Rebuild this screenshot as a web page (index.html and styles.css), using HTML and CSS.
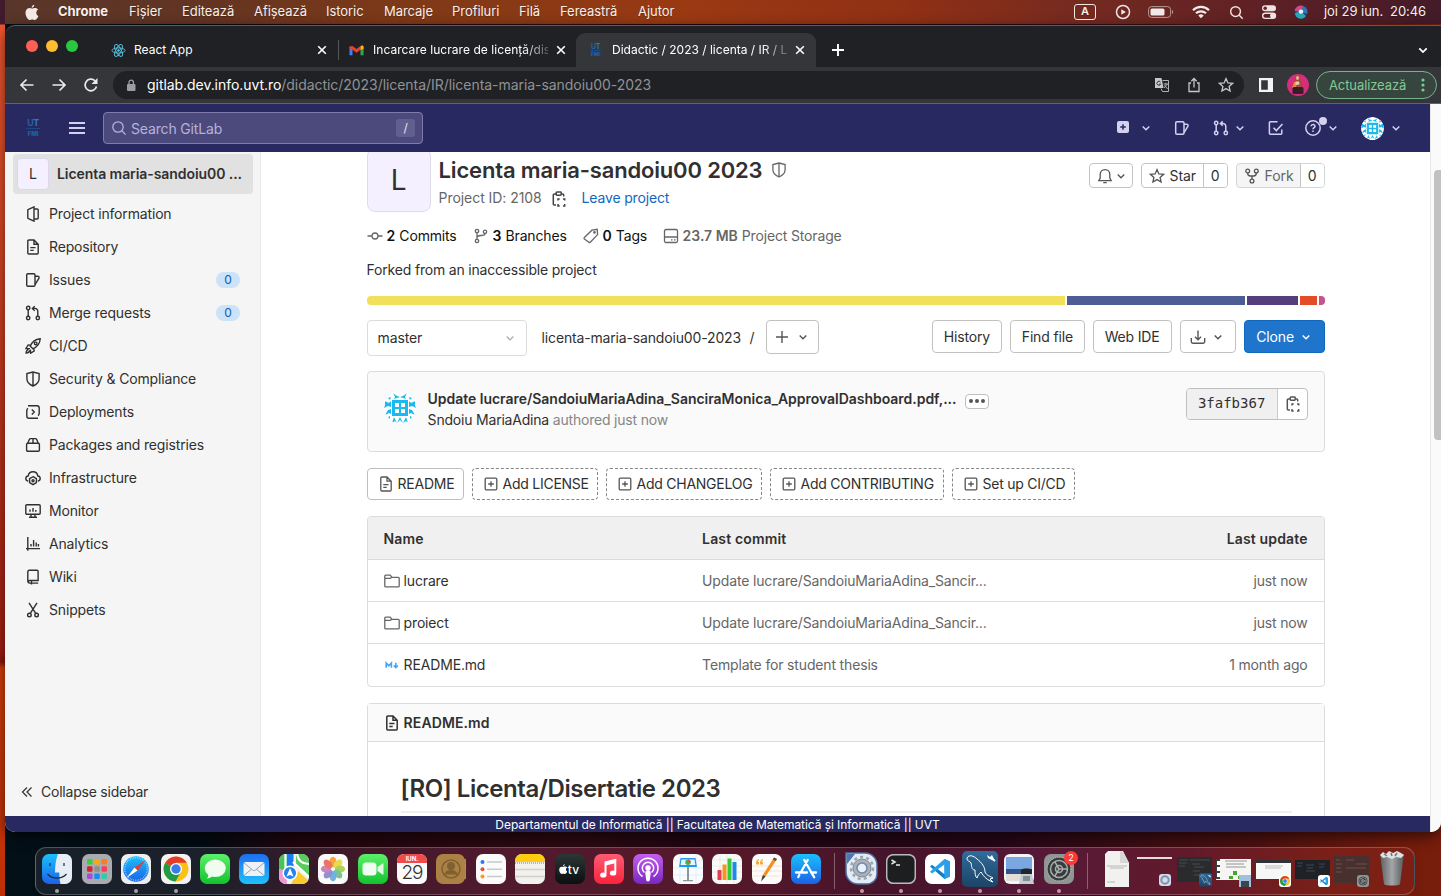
FILE: index.html
```html
<!DOCTYPE html>
<html lang="ro">
<head>
<meta charset="utf-8">
<title>Didactic / 2023 / licenta / IR / Licenta maria-sandoiu00 2023</title>
<link rel="stylesheet" href="styles.css">
</head>
<body>
<svg class="defs" aria-hidden="true">
  <defs>
    <linearGradient id="gBlue" x1="0" y1="0" x2="0" y2="1"><stop offset="0" stop-color="#1d6ff0"/><stop offset="1" stop-color="#1fc0fb"/></linearGradient>
    <linearGradient id="gStore" x1="0" y1="0" x2="0" y2="1"><stop offset="0" stop-color="#1ac0fb"/><stop offset="1" stop-color="#1c62e8"/></linearGradient>
    <linearGradient id="gGreen" x1="0" y1="0" x2="0" y2="1"><stop offset="0" stop-color="#5cf06a"/><stop offset="1" stop-color="#12c22d"/></linearGradient>
    <linearGradient id="gPink" x1="0" y1="0" x2="0" y2="1"><stop offset="0" stop-color="#fb5c74"/><stop offset="1" stop-color="#fa233b"/></linearGradient>
    <linearGradient id="gPurple" x1="0" y1="0" x2="0" y2="1"><stop offset="0" stop-color="#c45ff0"/><stop offset="1" stop-color="#7a27c0"/></linearGradient>
    <linearGradient id="gSea" x1="0" y1="0" x2="0" y2="1"><stop offset="0" stop-color="#2f6c9c"/><stop offset="1" stop-color="#1c4465"/></linearGradient>
    <linearGradient id="gTrash" x1="0" y1="0" x2="1" y2="0"><stop offset="0" stop-color="#5c6063"/><stop offset=".5" stop-color="#a3a7a9"/><stop offset="1" stop-color="#54585b"/></linearGradient>
    <linearGradient id="gTv" x1="0" y1="0" x2="0" y2="1"><stop offset="0" stop-color="#2b3735"/><stop offset="1" stop-color="#0b0f11"/></linearGradient>
  </defs>
  <symbol id="chev" viewBox="0 0 16 16"><path d="M4.700 6.500 8 9.800l3.300-3.300"/></symbol>
  <symbol id="close" viewBox="0 0 16 16"><path d="m4.200 4.200 7.600 7.600M11.800 4.200l-7.600 7.600"/></symbol>
  <symbol id="search" viewBox="0 0 16 16"><circle cx="7" cy="7" r="5.200"/><path d="m11 11 3.600 3.600"/></symbol>
  <symbol id="project" viewBox="0 0 16 16"><path d="M9 15.100 3.500 12.600a1 1 0 0 1-.7-1V4.400a1 1 0 0 1 .7-1L9 .9zM9 3h3.200a1 1 0 0 1 1 1v8a1 1 0 0 1-1 1H9"/></symbol>
  <symbol id="doc" viewBox="0 0 16 16"><path d="M9 1H3.800a1 1 0 0 0-1 1v12a1 1 0 0 0 1 1h8.400a1 1 0 0 0 1-1V5.200zM9 1v4.200h4.200M5.300 8.600h5.200M5.300 11.400h3.400"/></symbol>
  <symbol id="issues" viewBox="0 0 16 16"><rect x="1.700" y="1.800" width="8.300" height="12.400" rx="1.200"/><path d="M10 4.200h2.600a1.400 1.400 0 0 1 1.400 1.900L10 12.600"/></symbol>
  <symbol id="merge" viewBox="0 0 16 16"><circle cx="3.200" cy="3" r="1.700"/><circle cx="3.200" cy="13" r="1.700"/><circle cx="12.800" cy="13" r="1.700"/><path d="M3.200 4.700v6.600M12.800 11.300V6.200a2.800 2.800 0 0 0-2.800-2.800H7.600M9.700 1.200 7.400 3.400l2.300 2.300"/></symbol>
  <symbol id="rocket" viewBox="0 0 16 16"><path d="M5.300 8.200C7 4 10.400 1.200 15.200 .8c-.3 4.800-3 8.200-7.300 9.900zM5.600 7.300 3.200 6.900 1 10.500l4 .1M8.700 10.500l.5 2.500-3.600 2.200-.2-3.600M3.600 11.400c-1.800.4-2.400 1.700-2.500 3.600 1.800 0 3.200-.6 3.600-2.500"/><circle cx="10.700" cy="5.400" r="1.300"/></symbol>
  <symbol id="shield" viewBox="0 0 16 16"><path d="M8 1 1.900 2.500v5.200C1.900 11 4.500 13.500 8 15c3.500-1.500 6.100-4 6.100-7.300V2.500zM8 1v14"/></symbol>
  <symbol id="deploy" viewBox="0 0 16 16"><path d="M3 1.800H12a2.200 2.200 0 0 1 2.200 2.200v5.500a2.500 2.500 0 0 1-1.200 2.100M13 14.200H4A2.200 2.200 0 0 1 1.800 12V6.500a2.500 2.500 0 0 1 1.200-2.100M6.800 5.500 9.300 8l-2.500 2.500"/></symbol>
  <symbol id="package" viewBox="0 0 16 16"><path d="M2.800 6.200 4.300 2.500A1.500 1.500 0 0 1 5.700 1.600h4.600a1.500 1.500 0 0 1 1.400.9l1.500 3.700M8 1.600v4.600"/><rect x="1.600" y="6.200" width="12.800" height="8.100" rx="1.200"/></symbol>
  <symbol id="cloud" viewBox="0 0 16 16"><path d="M3.200 11.200C1.700 10.900.8 9.900.8 8.600c0-1.500 1-2.400 2.400-2.600C3.500 3.500 5.400 1.800 8 1.800s4.500 1.700 4.800 4.200c1.400.2 2.400 1.100 2.400 2.600 0 1.300-.9 2.300-2.400 2.600"/><path d="m8 6.700 3.400 2v4L8 14.700l-3.400-2v-4z"/><circle cx="8" cy="10.700" r="1"/></symbol>
  <symbol id="monitor" viewBox="0 0 16 16"><rect x=".8" y="1.700" width="14.400" height="9.600" rx="1"/><path d="M5 6.500v2.300M8 5v3.800M10.800 7v1.800M6 11.500v2.700M10 11.500v2.700M4 14.300h8"/></symbol>
  <symbol id="chart" viewBox="0 0 16 16"><path d="M2.800 1v13.800M1 12.600h14M6 8v2.500M8.600 4v6.500M11.200 6.500v4M13.400 8v2.500"/></symbol>
  <symbol id="book" viewBox="0 0 16 16"><path d="M5 14H4.500a1.800 1.800 0 0 1-1.700-1.800V2.600a1.300 1.300 0 0 1 1.300-1.300h8a1 1 0 0 1 1 1V11.500H4.500a1.300 1.300 0 0 0 0 2.600H13.200M6.500 11.500v4"/></symbol>
  <symbol id="snip" viewBox="0 0 16 16"><circle cx="4.400" cy="13" r="1.800"/><circle cx="11.600" cy="13" r="1.800"/><path d="M4 .8 10.700 11.400M12 .8 5.300 11.400"/></symbol>
  <symbol id="copy" viewBox="0 0 16 16"><path d="M5 14H3.300a1 1 0 0 1-1-1V4a1 1 0 0 1 1-1H5M10.500 3h1.200a1 1 0 0 1 1 1v1.500"/><rect x="5.200" y="1" width="5" height="3.200" rx=".7"/><path d="M7 9.500V8h1.700M12 8h1.700v1.500M13.700 13v2H12M8.700 15H7v-2"/></symbol>
  <symbol id="plusbox" viewBox="0 0 16 16"><rect x="2.200" y="2.200" width="11.600" height="11.600" rx="1.200"/><path d="M8 5.200v5.600M5.200 8h5.600"/></symbol>
  <symbol id="folder" viewBox="0 0 16 16"><path d="M.8 13V3a.9.9 0 0 1 .9-.9h4.500L8 4.300h6.300a.9.9 0 0 1 .9.9V13a.9.9 0 0 1-.9.9H1.700A.9.9 0 0 1 .8 13zM.8 5.400h5.400L8 4.300"/></symbol>
  <symbol id="star" viewBox="0 0 16 16"><path d="m8 1.600 1.900 4.300 4.700.4-3.500 3.100 1 4.600L8 11.600 3.900 14l1-4.600L1.400 6.300l4.700-.4z"/></symbol>
  <symbol id="identicon" viewBox="0 0 32 32"><circle cx="16" cy="16" r="16" fill="#fff"/>
    <g fill="#1cb9ee"><path d="M8 8h16v16H8zm3 3v4h4v-4zm6 0v4h4v-4zm-6 6v4h4v-4zm6 0v4h4v-4z" fill-rule="evenodd"/>
      <path d="M9 1l3 2.500L16 5l4-1.500L23 1l-2 4 1 2-3-1-3-1-3 1-3 1 1-2zM1 9l4 2 2-2v6l-3-1-4 2 1-3zM31 9l-4 2-2-2v6l3-1 4 2-1-3zM1 23l3-5 3-1v5l-2-1zM31 23l-3-5-3-1v5l2-1zM8 31l2-6 3 6-2-2zM13 31l3-6 3 6-3-3zM19 31l3-6 2 6-2-2zM4 25l2-1v3zM28 25l-2-1v3zM4 6l3-1-1 3zM28 6l-3-1 1 3z"/></g></symbol>
  <symbol id="chrome" viewBox="0 0 30 30"><circle cx="15" cy="15" r="12.500" fill="#fbc116"/><path d="M15 15 4.200 8.800A12.500 12.500 0 0 1 25.800 8.800H15z" fill="#e33b2e"/><path d="M4.200 8.800a12.500 12.500 0 0 0 10.300 18.700l5.200-9.200L15 15z" fill="#229a48"/><circle cx="15" cy="15" r="6" fill="#fff"/><circle cx="15" cy="15" r="4.700" fill="#3a7cec"/></symbol>
  <symbol id="vscode" viewBox="0 0 30 30"><rect width="30" height="30" rx="7" fill="#fff"/><path d="M19.500 5 25 7.500v15L19.500 25 5 12.500l2-1.800 12.500 9.500z" fill="#1180cc"/><path d="M19.500 5 25 7.500v15L19.500 25V10.500L7 19.500l-2-1.800z" fill="#2a9fea"/></symbol>
  <symbol id="dolphin" viewBox="0 0 36 36"><rect width="36" height="36" rx="5" fill="url(#gSea)"/><path d="M5 7c2-4 7-2 10 1 5 4 8 8 8 13 2 4 5 4 8 6l-3 1 3 3c-6-2-9-5-12-10-2 2-3 3-4 6-2-2-2-5-2-8-4 0-3-4-4-7-1-2-4-2-4-4z" fill="none" stroke="#fff" stroke-width="1"/><path d="m25 4 3 2 2-2 2 4-2 1-4-2z" fill="#fff"/><path d="m29 7 4 3" stroke="#fff" stroke-width="2"/></symbol>
  <symbol id="gear" viewBox="0 0 30 30"><circle cx="15" cy="15" r="11.500" fill="#373b3c"/><g fill="none" stroke="#a9adae"><circle cx="15" cy="15" r="12" stroke-width="1.300" stroke-dasharray="1 1"/><circle cx="15" cy="15" r="8.500" stroke-width="1.500"/><circle cx="15" cy="15" r="3.500"/><path d="M15 15h8.500M15 15l-4.300 7.300M15 15l-4.300-7.300" stroke-width="1.500"/></g></symbol>
</svg>

<header class="menubar">
  <svg class="apple" viewBox="0 0 14 16"><path fill="#f1e9e6" d="M9.300.2c.1 1.500-1.100 2.900-2.600 3C6.500 1.800 7.900.4 9.300.2zM11.300 8.300c0-1.500.8-2.500 1.900-3.200-.8-1.100-1.900-1.600-3.200-1.600-1.200 0-1.900.6-2.800.6-1 0-1.900-.6-3-.6C2 3.600.5 5.500.5 8.300c0 3.200 2.200 7.300 4.200 7.300.9 0 1.400-.6 2.600-.6s1.600.6 2.600.6c1.500 0 3-2.600 3.500-4-1.300-.6-2.100-1.800-2.100-3.300z"/></svg>
  <b>Chrome</b><span>Fișier</span><span>Editează</span><span>Afișează</span><span>Istoric</span><span>Marcaje</span><span>Profiluri</span><span>Filă</span><span>Fereastră</span><span>Ajutor</span>
  <i></i>
  <span class="kbd">A</span>
  <svg class="m16 ln" viewBox="0 0 16 16"><circle cx="8" cy="8" r="6.500"/><path d="m6.300 5.200 4.500 2.800-4.500 2.800z" fill="#eee" stroke="none"/></svg>
  <svg class="batt" viewBox="0 0 26 12"><rect x=".6" y=".6" width="22" height="10.800" rx="3" fill="none" stroke="#b59b97"/><rect x="2.500" y="2.400" width="14" height="7.200" rx="1.500" fill="#f1e9e8"/><path d="M24 4v4c1.500-.7 1.500-3.300 0-4z" fill="#b59b97"/></svg>
  <svg class="wifi" viewBox="0 0 18 14"><g fill="none" stroke="#f3eceb" stroke-width="2.200"><path d="M1 5.200a11.500 11.500 0 0 1 16 0M4 8.300a7.200 7.200 0 0 1 10 0"/></g><path d="M9 13.300 6.300 10.600a4 4 0 0 1 5.400 0z" fill="#f3eceb"/></svg>
  <svg class="m16 ln mag"><use href="#search"/></svg>
  <svg class="m16" viewBox="0 0 16 16"><rect x="1" y="1.200" width="14" height="6" rx="3" fill="#eee2e2"/><circle cx="4.200" cy="4.200" r="1.800" fill="#6a2426"/><rect x="1.700" y="9.200" width="12.800" height="5.200" rx="2.600" fill="none" stroke="#eee2e2" stroke-width="1.400"/><circle cx="11.600" cy="11.800" r="2.600" fill="#eee2e2"/></svg>
  <svg class="m16" viewBox="0 0 16 16"><circle cx="8" cy="8" r="7" fill="#31315f"/><path d="M1.500 7a6.500 6.500 0 0 1 9-5L8 8z" fill="#cf4b84"/><path d="M10 2a6 6 0 0 1 4 8L8 8z" fill="#3276b5"/><path d="M2 9a6 6 0 0 0 11 3L8 7z" fill="#27a7b5"/><circle cx="8" cy="7.600" r="2.200" fill="#e8f4fb"/></svg>
  <span class="date">joi 29 iun.</span><span class="time">20:46</span>
</header>

<div class="window">
  <div class="tabs">
    <div class="lights"><i></i><i></i><i></i></div>
    <div class="tab t1">
      <svg class="fav" viewBox="0 0 16 16"><ellipse cx="8" cy="8" rx="7" ry="2.800"/><ellipse cx="8" cy="8" rx="7" ry="2.800" transform="rotate(60 8 8)"/><ellipse cx="8" cy="8" rx="7" ry="2.800" transform="rotate(120 8 8)"/><circle cx="8" cy="8" r="1" fill="#53c1de"/></svg>
      <span class="tt">React App</span><svg class="x"><use href="#close"/></svg>
    </div>
    <div class="tab t2">
      <svg class="fav" viewBox="0 0 16 16"><path d="M.5 4v9h3.200V6.500z" fill="#3f82ee"/><path d="M15.500 4v9h-3.200V6.500z" fill="#33a653"/><path d="m.5 3.800 3.200-.6L8 6.500l4.300-3.300v3.900L8 10.300 3.700 7.100.5 5.500z" fill="#e8402f"/><path d="M12.300 3.200c1.500-1.200 3.200-.6 3.200.8v2l-3.200 1.500z" fill="#fbbc05"/></svg>
      <span class="tt fade">Incarcare lucrare de licență/dis</span><svg class="x"><use href="#close"/></svg>
    </div>
    <div class="tab t3">
      <span class="uvt mini"><b>U<em>T</em></b><small>FMI</small></span>
      <span class="tt fade">Didactic / 2023 / licenta / IR / Li</span><svg class="x"><use href="#close"/></svg>
    </div>
    <svg class="newtab" viewBox="0 0 16 16"><path d="M8 2v12M2 8h12"/></svg>
    <svg class="tabmenu"><use href="#chev"/></svg>
  </div>

  <div class="toolbar">
    <svg class="tb" viewBox="0 0 16 16"><path d="M14.500 8H2M7.500 2.500 2 8l5.500 5.500"/></svg>
    <svg class="tb" viewBox="0 0 16 16"><path d="M1.500 8H14M8.500 2.500 14 8l-5.500 5.500"/></svg>
    <svg class="tb" viewBox="0 0 16 16"><path d="M13.500 9.500A5.800 5.800 0 1 1 12 3.900"/><path d="M14.500 1v6h-6z" fill="#e8eaed" stroke="none"/></svg>
    <div class="omnibox">
      <svg class="lock" viewBox="0 0 10 13"><rect x="1" y="5" width="8.500" height="7" rx="1" fill="#9a9da1"/><path d="M3 5V3.300a2.200 2.200 0 0 1 4.400 0V5" fill="none" stroke="#9a9da1" stroke-width="1.300"/></svg>
      <span class="url"><b>gitlab.dev.info.uvt.ro</b>/didactic/2023/licenta/IR/licenta-maria-sandoiu00-2023</span>
      <svg class="ob tr" viewBox="0 0 16 16"><path d="M1 1h6.500l2 10H1z" fill="#c5c7ca"/><path d="M8.500 3.500h6v11h-6l-1.500-3M9.500 7h4.500M11.800 5.800V7M10 11l3.500-4M10.500 8l3 4" fill="none" stroke="#b0b2b5"/><path d="M6.500 5a2 2 0 1 0 .2 2.200H5" fill="none" stroke="#33353a"/></svg>
      <svg class="ob sh" viewBox="0 0 16 16"><path d="M5 6H3v8.500h10V6h-2M8 10.500V1.700M5.300 4.200 8 1.500l2.700 2.700"/></svg>
      <svg class="ob sh"><use href="#star"/></svg>
    </div>
    <svg class="panel" viewBox="0 0 14 14"><path d="M0 0h14v14H0zm2.200 2.200v9.600h6.600V2.200z" fill="#f1f3f4" fill-rule="evenodd"/></svg>
    <svg class="face" viewBox="0 0 22 22"><circle cx="11" cy="11" r="11" fill="#d42e7c"/><path d="M8.500 2.500C10 1 13 2 13 5l3 7-4 3-6-3 2-5z" fill="#a44d34"/><path d="m7 8-2 6 4-1 1-5z" fill="#e78a35"/><ellipse cx="10.500" cy="4" rx="1.500" ry="2" fill="#e6b291"/><path d="M8.500 7.500h3.500l.5 3-4 .5z" fill="#e8cdb8"/><rect x="5.500" y="13" width="11" height="7" rx="1.500" fill="#321f28"/></svg>
    <div class="update"><span>Actualizează</span><svg viewBox="0 0 4 14"><circle cx="2" cy="2" r="1.600"/><circle cx="2" cy="7" r="1.600"/><circle cx="2" cy="12" r="1.600"/></svg></div>
  </div>

  <div class="viewport">
    <div class="page">
      <nav class="gl-header">
        <span class="uvt"><b>U<em>T</em></b><small>FMI</small></span>
        <span class="burger"><i></i><i></i><i></i></span>
        <div class="gsearch"><svg><use href="#search"/></svg><span>Search GitLab</span><kbd>/</kbd></div>
        <div class="gicons">
          <svg viewBox="0 0 16 16"><rect x="2" y="1" width="12" height="12" rx="2" fill="#d3d0f0" stroke="none"/><path d="M8 4.200v5.600M5.200 7h5.600" stroke="#292961"/></svg>
          <svg><use href="#chev"/></svg>
          <svg><use href="#issues"/></svg>
          <svg><use href="#merge"/></svg>
          <svg><use href="#chev"/></svg>
          <svg viewBox="0 0 16 16"><path d="M9.500 1.800H2.300a.9.900 0 0 0-.9.900v10.600c0 .5.400.9.900.9h10.600c.5 0 .9-.4.900-.9V9.500M5.500 7.800l2.800 2.800 6.200-6.700"/></svg>
          <svg viewBox="0 0 16 16"><circle cx="8" cy="8" r="7.200"/><path d="M6 6.300c.2-2.600 4.200-2.400 4 .1C9.900 7.700 8 7.600 8 9.300M8 10.600v1.300"/><circle cx="18" cy="1" r="4" fill="#d3d0f0" stroke="none"/></svg>
          <svg><use href="#chev"/></svg>
          <svg class="gav"><use href="#identicon"/></svg>
          <svg><use href="#chev"/></svg>
        </div>
      </nav>

      <div class="body">
        <aside class="sidebar">
          <div class="ctx"><span class="pav">L</span><b>Licenta maria-sandoiu00 ...</b></div>
          <ul>
            <li><svg><use href="#project"/></svg>Project information</li>
            <li><svg><use href="#doc"/></svg>Repository</li>
            <li><svg><use href="#issues"/></svg>Issues<em>0</em></li>
            <li><svg><use href="#merge"/></svg>Merge requests<em>0</em></li>
            <li><svg><use href="#rocket"/></svg>CI/CD</li>
            <li><svg><use href="#shield"/></svg>Security &amp; Compliance</li>
            <li><svg><use href="#deploy"/></svg>Deployments</li>
            <li><svg><use href="#package"/></svg>Packages and registries</li>
            <li><svg><use href="#cloud"/></svg>Infrastructure</li>
            <li><svg><use href="#monitor"/></svg>Monitor</li>
            <li><svg><use href="#chart"/></svg>Analytics</li>
            <li><svg><use href="#book"/></svg>Wiki</li>
            <li><svg><use href="#snip"/></svg>Snippets</li>
          </ul>
          <div class="collapse"><svg viewBox="0 0 12 12"><path d="M6 1.500 1.500 6 6 10.500M10.500 1.500 6 6l4.500 4.500"/></svg>Collapse sidebar</div>
        </aside>

        <main class="main">
          <section class="phead">
            <div class="bigav">L</div>
            <div class="ptitle">
              <h1>Licenta maria-sandoiu00 2023<svg><use href="#shield"/></svg></h1>
              <p><span class="pid">Project ID: 2108</span><svg><use href="#copy"/></svg><a>Leave project</a></p>
            </div>
            <div class="pactions">
              <span class="sb bell"><svg viewBox="0 0 16 16"><path d="M1.800 12.600h12.400L12.800 10V6.500C12.800 3.700 10.800 1.600 8 1.600S3.200 3.700 3.200 6.500V10zM6.300 14.600h3.400"/></svg><svg class="cv"><use href="#chev"/></svg></span>
              <span class="sb star"><svg><use href="#star"/></svg><span>Star</span><u>0</u></span>
              <span class="sb fork"><svg viewBox="0 0 16 16"><circle cx="3.700" cy="3" r="1.900"/><circle cx="12.300" cy="3" r="1.900"/><circle cx="8" cy="13" r="1.900"/><path d="M3.700 4.900c0 2.300 1 3.100 2.700 3.100h3.200c1.700 0 2.700-.8 2.700-3.100M8 8v3"/></svg><span>Fork</span><u>0</u></span>
            </div>
          </section>

          <div class="stats">
            <span class="s1"><svg viewBox="0 0 16 16"><circle cx="8" cy="8" r="3"/><path d="M.5 8H5M11 8h4.500"/></svg><b>2</b> Commits</span>
            <span class="s2"><svg viewBox="0 0 16 16"><circle cx="4" cy="3" r="1.700"/><circle cx="12" cy="3.800" r="1.700"/><circle cx="4" cy="13" r="1.700"/><path d="M4 4.700v6.600M4 10c0-2 1-2.500 4-2.500 2.500 0 4-.4 4-2"/></svg><b>3</b> Branches</span>
            <span class="s3"><svg viewBox="0 0 16 16"><path d="m1.400 9.500 7.500-7.300 5.300-.9.400 5.300-7.300 7.600a1 1 0 0 1-1.400 0L1.400 11a1 1 0 0 1 0-1.500z"/><circle cx="11.500" cy="4.400" r=".7"/></svg><b>0</b> Tags</span>
            <span class="s4"><svg viewBox="0 0 16 16"><rect x="1.500" y="1.500" width="13" height="13" rx="1.500"/><path d="M1.500 9h13M8 11.800h1.500M11 11.800h1.500"/></svg><b>23.7 MB</b> Project Storage</span>
          </div>
          <p class="forked">Forked from an inaccessible project</p>
          <div class="langs"><i class="js"></i><i class="ts"></i><i class="css"></i><i class="html"></i><i class="sc"></i></div>

          <div class="tree-bar">
            <span class="select">master<svg><use href="#chev"/></svg></span>
            <span class="crumb">licenta-maria-sandoiu00-2023</span><span class="slash">/</span>
            <span class="btn add"><svg viewBox="0 0 16 16"><path d="M8 2v12M2 8h12"/></svg><svg><use href="#chev"/></svg></span>
            <span class="btn hist">History</span><span class="btn find">Find file</span><span class="btn ide">Web IDE</span>
            <span class="btn dl"><svg viewBox="0 0 16 16"><path d="M1.300 9v3.600a1.600 1.600 0 0 0 1.600 1.600h10.200a1.600 1.600 0 0 0 1.600-1.600V9M8 1.500v9M5 7.800l3 3 3-3"/></svg><svg><use href="#chev"/></svg></span>
            <span class="btn clone">Clone<svg><use href="#chev"/></svg></span>
          </div>

          <section class="commit">
            <svg class="cav"><use href="#identicon"/></svg>
            <div class="ctext"><p class="cmsg"><b>Update lucrare/SandoiuMariaAdina_SanciraMonica_ApprovalDashboard.pdf,...</b><span class="dots"><i></i><i></i><i></i></span></p>
            <p class="cby">Sndoiu MariaAdina <em>authored just now</em></p></div>
            <div class="sha"><code>3fafb367</code><svg><use href="#copy"/></svg></div>
          </section>

          <div class="quick">
            <span class="q q1"><svg><use href="#doc"/></svg>README</span>
            <span class="q q2"><svg><use href="#plusbox"/></svg>Add LICENSE</span>
            <span class="q q3"><svg><use href="#plusbox"/></svg>Add CHANGELOG</span>
            <span class="q q4"><svg><use href="#plusbox"/></svg>Add CONTRIBUTING</span>
            <span class="q q5"><svg><use href="#plusbox"/></svg>Set up CI/CD</span>
          </div>

          <div class="files">
            <div class="row head"><b>Name</b><b>Last commit</b><b>Last update</b></div>
            <div class="row"><span><svg><use href="#folder"/></svg>lucrare</span><span>Update lucrare/SandoiuMariaAdina_Sancir...</span><span>just now</span></div>
            <div class="row"><span><svg><use href="#folder"/></svg>proiect</span><span>Update lucrare/SandoiuMariaAdina_Sancir...</span><span>just now</span></div>
            <div class="row"><span><svg class="md" viewBox="0 0 16 16"><path d="M2.200 10.700V6l2.600 2.800L7.400 6v4.700M11.800 5.800v4.500M9.700 8.500l2.100 2.200 2.100-2.200"/></svg>README.md</span><span>Template for student thesis</span><span>1 month ago</span></div>
          </div>

          <article class="readme">
            <div class="rhead"><svg><use href="#doc"/></svg>README.md</div>
            <h2>[RO] Licenta/Disertatie 2023</h2>
          </article>
        </main>
      </div>
      <footer class="foot">Departamentul de Informatică || Facultatea de Matematică și Informatică || UVT</footer>
    </div>
    <div class="scroll"><i></i></div>
  </div>
</div>

<div class="dock">
  <span class="app on"><svg viewBox="0 0 30 30"><rect width="30" height="30" rx="7" fill="url(#gStore)"/><path d="M16 0h7a7 7 0 0 1 7 7v16a7 7 0 0 1-7 7h-4.500c-1-4-1.200-8-1.200-11.500H13C13 11 14 5 16 0z" fill="#e7edf5"/><path d="M8 9v3M22 9v3M5.500 20c5 5.500 14 5.500 19 0" fill="none" stroke="#1c2c44" stroke-width="1.200"/></svg></span>
  <span class="app"><svg viewBox="0 0 30 30"><rect width="30" height="30" rx="7" fill="#a9abb1"/><g><rect x="5" y="5" width="5.500" height="5.500" rx="1.300" fill="#35d33f"/><rect x="12.300" y="5" width="5.500" height="5.500" rx="1.300" fill="#fca80c"/><rect x="19.500" y="5" width="5.500" height="5.500" rx="1.300" fill="#fa7d1e"/><rect x="5" y="12.300" width="5.500" height="5.500" rx="1.300" fill="#d5222d"/><rect x="12.300" y="12.300" width="5.500" height="5.500" rx="1.300" fill="#8c9094"/><rect x="19.500" y="12.300" width="5.500" height="5.500" rx="1.300" fill="#fa3e5a"/><rect x="5" y="19.500" width="5.500" height="5.500" rx="1.300" fill="#a849e0"/><rect x="12.300" y="19.500" width="5.500" height="5.500" rx="1.300" fill="#168fee"/><rect x="19.500" y="19.500" width="5.500" height="5.500" rx="1.300" fill="#35c9a5"/></g></svg></span>
  <span class="app on"><svg viewBox="0 0 30 30"><rect width="30" height="30" rx="7" fill="#eceef0"/><circle cx="15" cy="15" r="12.800" fill="url(#gStore)"/><circle cx="15" cy="15" r="11.300" fill="none" stroke="#bfe4fb" stroke-dasharray=".6 1.200"/><path d="m24.500 6-8 10.500-3-3z" fill="#ea3b32"/><path d="m5.500 24 8-10.500 3 3z" fill="#fff"/></svg></span>
  <span class="app on"><svg viewBox="0 0 30 30"><rect width="30" height="30" rx="7" fill="#f3f3f4"/><use href="#chrome" width="30" height="30"/></svg></span>
  <span class="app"><svg viewBox="0 0 30 30"><rect width="30" height="30" rx="7" fill="url(#gGreen)"/><ellipse cx="15.300" cy="14.300" rx="10.500" ry="8.800" fill="#effcef"/><path d="M8 20c.5 2 0 3.500-1.500 4.500 3 0 4.500-1 6-2.500z" fill="#e7f9e8"/></svg></span>
  <span class="app"><svg viewBox="0 0 30 30"><rect width="30" height="30" rx="7" fill="url(#gBlue)"/><rect x="4.500" y="8" width="21" height="14" rx="2" fill="#eef2f6"/><path d="M5 8.800 13.500 16c1 .8 2 .8 3 0L25 8.800M5 21.500l7.500-6.300M25 21.500l-7.500-6.300" fill="none" stroke="#8c98a3" stroke-width=".9"/></svg></span>
  <span class="app"><svg viewBox="0 0 30 30" class="round"><rect width="30" height="30" fill="#eef1ec"/><path d="M0 0h9v18H0z" fill="#48c553"/><path d="M17 0h13v22L17 12z" fill="#5bcb60"/><path d="M0 15c5-1 8 4 8 15H0z" fill="#eb9ad4"/><path d="M19 17 30 27v3H12z" fill="#facb2a"/><path d="M7.500 0h7v13h-7z" fill="#1c7df0"/><path d="M14 8 31 24M18 0c1 6 5 10 12 10M6.500 0v14" stroke="#fff" stroke-width="2.200" fill="none"/><circle cx="11" cy="19" r="6.800" fill="#2383f0" stroke="#fff"/><path d="m11 14 3.500 8.500L11 21l-3.500 1.500z" fill="#fff"/></svg></span>
  <span class="app"><svg viewBox="0 0 30 30"><rect width="30" height="30" rx="7" fill="#fafafa"/><g opacity=".85"><ellipse cx="15" cy="8" rx="3.500" ry="5.200" fill="#fb951f"/><ellipse cx="15" cy="8" rx="3.500" ry="5.200" fill="#e8d62a" transform="rotate(45 15 15)"/><ellipse cx="15" cy="8" rx="3.500" ry="5.200" fill="#a4c93c" transform="rotate(90 15 15)"/><ellipse cx="15" cy="8" rx="3.500" ry="5.200" fill="#62bb83" transform="rotate(135 15 15)"/><ellipse cx="15" cy="8" rx="3.500" ry="5.200" fill="#5da5d8" transform="rotate(180 15 15)"/><ellipse cx="15" cy="8" rx="3.500" ry="5.200" fill="#827fc6" transform="rotate(225 15 15)"/><ellipse cx="15" cy="8" rx="3.500" ry="5.200" fill="#c271b0" transform="rotate(270 15 15)"/><ellipse cx="15" cy="8" rx="3.500" ry="5.200" fill="#ee5c48" transform="rotate(315 15 15)"/></g></svg></span>
  <span class="app"><svg viewBox="0 0 30 30"><rect width="30" height="30" rx="7" fill="url(#gGreen)"/><rect x="4.500" y="8.500" width="14" height="13" rx="3.500" fill="#effcef"/><path d="m19.500 13 5-3.500c.6-.4 1 0 1 .5v10c0 .5-.4.900-1 .5l-5-3.500z" fill="#e3f8e4"/></svg></span>
  <span class="app cal"><span class="calbox"><b>IUN.</b><span>29</span></span></span>
  <span class="app"><svg viewBox="0 0 30 30"><path d="M25 5h6v20h-6z" fill="#64a65a"/><path d="M25 10h6v5h-6z" fill="#d88a38"/><rect width="29" height="30" rx="7" fill="#ab8146"/><g fill="none" stroke="#80602f"><circle cx="15" cy="15" r="9"/><circle cx="15" cy="12" r="3.200" fill="#80602f"/><path d="M9 20.500c1.500-5 10.500-5 12 0" fill="#80602f"/></g></svg></span>
  <span class="app"><svg viewBox="0 0 30 30"><rect width="30" height="30" rx="7" fill="#fbfbfb"/><circle cx="6.500" cy="8" r="2" fill="#1f7cf5"/><circle cx="6.500" cy="15.300" r="2" fill="#f0493e"/><circle cx="6.500" cy="22.500" r="2" fill="#fa9b1e"/><path d="M11 8h15M11 15.300h15M11 22.500h15" stroke="#c9c9cb"/></svg></span>
  <span class="app"><svg viewBox="0 0 30 30"><rect width="30" height="30" rx="7" fill="#f2f1ee"/><path d="M0 8V7a7 7 0 0 1 7-7h16a7 7 0 0 1 7 7v1z" fill="#fdcb10"/><path d="M0 9h30" stroke="#a6a08f" stroke-dasharray="1 1"/><path d="M0 15.500h30M0 22.500h30" stroke="#d0d0cd"/></svg></span>
  <span class="app"><svg viewBox="0 0 30 30"><rect width="30" height="30" rx="7" fill="url(#gTv)"/><path d="M9.800 10.300c.1 1-.8 1.800-1.700 1.900-.1-1 .7-1.900 1.700-1.900zM11 15.500c0-1 .5-1.600 1.200-2-1-1.400-2.500-1-4.200-.6-1.800-.6-3.800.1-3.800 2.800 0 2 1.200 4.200 2.600 4.200.7 0 1.800-.4 2.800 0 1.300 0 2.200-1.200 2.500-2.400-.7-.4-1.100-1.100-1.100-2z" fill="#fff"/><text x="12.800" y="19.800" class="tvt">tv</text></svg></span>
  <span class="app"><svg viewBox="0 0 30 30"><rect width="30" height="30" rx="7" fill="url(#gPink)"/><path d="M11.500 20V8.300L21.300 6v12" fill="none" stroke="#fff" stroke-width="2"/><path d="M11.500 8.300 21.300 6v3.200l-9.800 2.300z" fill="#fff"/><ellipse cx="9.300" cy="21" rx="3.200" ry="2.600" fill="#fff"/><ellipse cx="19.100" cy="19" rx="3.200" ry="2.600" fill="#fff"/></svg></span>
  <span class="app"><svg viewBox="0 0 30 30"><rect width="30" height="30" rx="7" fill="url(#gPurple)"/><g fill="none" stroke="#fff" stroke-width="1.500"><path d="M9.500 22.500a10 10 0 1 1 11 0M11.500 18.500a5.700 5.700 0 1 1 7 0"/></g><circle cx="15" cy="14" r="2.700" fill="#fff"/><path d="M12.300 19a2.700 2.700 0 0 1 5.400 0l-.8 6.500a1.900 1.900 0 0 1-3.800 0z" fill="#fff"/></svg></span>
  <span class="app"><svg viewBox="0 0 30 30"><rect width="30" height="30" rx="7" fill="#fafbfd"/><path d="M0 7h30M0 14h30M0 21h30M7 0v30M23 0v30" stroke="#dde7f2" stroke-width=".7"/><path d="M7.500 4h15L24 13H6z" fill="#2398ef"/><path d="M8.500 5.500h13l.9 5.500H7.600z" fill="#e9f5fd"/><circle cx="15" cy="8.300" r="2.700" fill="#3bb455"/><path d="M15 5.600v2.700h2.700A2.700 2.700 0 0 0 15 5.600z" fill="#ee523a"/><path d="M14 13h2v13h-2zM10 26h10v1.200H10z" fill="#8b969f"/></svg></span>
  <span class="app"><svg viewBox="0 0 30 30"><rect width="30" height="30" rx="7" fill="#fafbf8"/><path d="M0 6h30M0 12h30M0 18h30M0 24h30M8 0v30M15 0v30M22 0v30" stroke="#dbebd8" stroke-width=".7"/><path d="M5.500 16h4v10h-4z" fill="#e63b52"/><path d="M10.500 10.500h4V26h-4z" fill="#f6971d"/><path d="M15.500 4.500h4V26h-4z" fill="#32cc3a"/><path d="M20.500 8h4v18h-4z" fill="#2188ec"/></svg></span>
  <span class="app"><svg viewBox="0 0 30 30"><rect width="30" height="30" rx="7" fill="#fdfcfa"/><path d="M0 12h30M0 17h30M0 22h30" stroke="#f1dfc9" stroke-width=".8"/><path d="M4 9c0-2.300 1-3.500 3-4v1.300C6 6.700 5.700 7 5.700 7.700H7v2.800H4zM8 9c0-2.300 1-3.500 3-4v1.300c-1 .4-1.300.7-1.300 1.400H11v2.800H8z" fill="#f5a640"/><path d="M22 3.500 25 5 13.500 22.500 10.800 21z" fill="#f39121"/><path d="m10.800 21 2.700 1.500L9 27.500z" fill="#3d3d3d"/><path d="m22 3.500 3 1.500-1.200 2-3-1.500z" fill="#55504c"/></svg></span>
  <span class="app"><svg viewBox="0 0 30 30"><rect width="30" height="30" rx="7" fill="url(#gStore)"/><path d="m13.300 6 8.800 15.500M16.700 6 9.800 18.500M8.300 21l-1 2M5 18.500h11M20 18.500h5M22.500 22l.7 1.300" fill="none" stroke="#fff" stroke-width="2.300" stroke-linecap="round"/></svg></span>
  <i class="sep s-a"></i>
  <span class="app on"><svg viewBox="0 0 33 33" class="big"><path d="M1 1h19a12 12 0 0 1 12 12v9a10 10 0 0 1-10 10h-9A12 12 0 0 1 1 20z" fill="#e3ecf6" stroke="#4b6e9d" stroke-width="1.500"/><path d="M2 2h8L2 12z" fill="#4d78ad"/><circle cx="17" cy="16" r="9" fill="#aab1bb" stroke="#7f8894" stroke-width="1"/><circle cx="17" cy="16" r="11" fill="none" stroke="#9ba3af" stroke-width="2.500" stroke-dasharray="3 3.200"/><circle cx="17" cy="16" r="5" fill="#e8f0fa" stroke="#6f8aa9" stroke-width="1.500"/></svg></span>
  <span class="app on"><svg viewBox="0 0 30 30"><rect x=".7" y=".7" width="28.600" height="28.600" rx="6.500" fill="#1d1e1f" stroke="#b9b9bb" stroke-width="1.500"/><path d="m5.500 6 3.500 2-3.500 2M10 11h4" fill="none" stroke="#e8e8e8"/></svg></span>
  <span class="app on"><svg><use href="#vscode"/></svg></span>
  <span class="app on"><svg class="bigger"><use href="#dolphin"/></svg></span>
  <span class="app on"><svg viewBox="0 0 30 30"><rect width="30" height="30" rx="6" fill="#f2f4f6"/><path d="M2 3h26v12H2z" fill="#7aa7e2"/><path d="M2 15h26v6H2z" fill="#2c568c"/><path d="M2 20h26v7H2z" fill="#e3dfd6"/><path d="M17 16c0-2 11-2 11 0v4H17z" fill="#222528"/><path d="M17 20h11l2 10H15z" fill="#c3ccd1"/><path d="M19 22h7v5h-7z" fill="#838d94"/></svg></span>
  <span class="app on"><svg viewBox="0 0 30 30"><rect width="30" height="30" rx="7" fill="#8f9593"/><use href="#gear" width="30" height="30"/></svg><em class="count">2</em></span>
  <i class="sep s-b"></i>
  <span class="app"><svg class="paper" viewBox="0 0 25 36"><path d="M4 0h15l6 12v24H1V3z" fill="#f1f1f0"/><path d="M16 0v12h9L19 1z" fill="#d7d7d6"/><path d="M3 15h20M6 17h14M3 31h8" stroke="#aaa" stroke-width=".8"/></svg></span>
  <span class="app thumb"><svg viewBox="0 0 36 34"><path d="M0 3h35v2H0z" fill="#e7dcdc"/><rect x="22" y="20" width="12" height="12" rx="3" fill="#d2dcec"/><circle cx="28" cy="26" r="3.700" fill="none" stroke="#8291aa" stroke-width="2"/></svg></span>
  <span class="app thumb"><svg viewBox="0 0 36 34"><path d="M0 3h35v25H0z" fill="#292b2c"/><path d="M2 6h9M2 9h8M2 12h6M13 6h20M15 10h8M17 13h10M16 17h7M17 21h5" stroke="#484c4e" stroke-width="1"/><use href="#dolphin" x="22" y="19" width="13" height="14"/></svg></span>
  <span class="app thumb"><svg viewBox="0 0 36 34"><path d="M0 5h35v21H0z" fill="#f5f5f4"/><path d="M0 5h4v20H0z" fill="#423b3c"/><path d="M9 7h22M10 10h18M10 13h20" stroke="#b5b5b5"/><path d="M1 7h3v4H1zM1 13h3v4H1zM1 19h3v4H1z" fill="#fff"/><path d="M17 17h4v4h-4zM13 22h4v3h-4zM22 22h4v3h-4z" fill="#44a630"/><path d="M23 21h12v12H23z" fill="#a3bfdf"/><path d="M25 27h8v6h-8z" fill="#3c454d"/></svg></span>
  <span class="app thumb"><svg viewBox="0 0 36 34"><path d="M0 6h35v19H0z" fill="#f7f7f7"/><path d="M0 6h35v3H0z" fill="#303139"/><path d="M9 12h18M9 14h16" stroke="#d0d0d0"/><rect x="23" y="21" width="12" height="12" rx="3" fill="#fff"/><use href="#chrome" x="23" y="21" width="12" height="12"/></svg></span>
  <span class="app thumb"><svg viewBox="0 0 36 34"><path d="M0 6h35v19H0z" fill="#202126"/><path d="M2 9h6M2 12h5M11 11h8M12 14h6M11 17h9M24 10h6M24 13h5" stroke="#303c48"/><use href="#vscode" x="23" y="21" width="12" height="12"/></svg></span>
  <span class="app thumb"><svg viewBox="0 0 36 34"><path d="M0 2h35v27H0z" fill="#47302e"/><path d="M2 6h4M2 10h6M2 14h5M2 18h6M12 6h8M22 10h11M12 14h20" stroke="#60463f"/><rect x="23" y="21" width="12" height="12" rx="3" fill="#909694"/><use href="#gear" x="23" y="21" width="12" height="12"/></svg></span>
  <span class="app"><svg class="trash" viewBox="0 0 28 36"><path d="M2 3h24l-4 30c-.3 2-15.700 2-16 0z" fill="url(#gTrash)"/><path d="m2 4 3-3 3 2 3-3 4 2 4-2 4 2 3 2-3 3-5-1-4 2-5-2-4 1z" fill="#dfe1e2"/><path d="m6 3 3 2M13 2l1 3M19 2l-2 3" stroke="#6b757a"/></svg></span>
</div>
</body>
</html>
```
FILE: styles.css
```css
* { box-sizing: border-box; }
body {
  margin: 0; width: 1441px; height: 896px; overflow: hidden;
  font: 14px/20px Inter, "Noto Sans", sans-serif; color: #303030; padding-left: 5px;
  background:
    linear-gradient(180deg, #421a2e 24px, #f1562f 25px, #e6502b 160px, #a61e14 650px, #8d1813 662px, #d83f0d 668px, #bd2f07 896px) 0 0 / 5px 896px no-repeat,
    linear-gradient(90deg, #031018 0, #020b13 200px, #22050f 300px, #2c0a12 580px, #200511 700px, #260718 1000px, #4d1110 1260px, #7a1e0b 1441px);
}
h1, h2, p, ul { margin: 0; padding: 0; }
em { font-style: normal; }
.defs { position: absolute; width: 0; height: 0; }
svg { fill: none; stroke: currentColor; stroke-width: 1.5; flex: none; display: block; }

/* macOS menu bar */
.menubar {
  height: 24px; display: grid; align-items: center; color: #f7efeb; font-size: 13px; line-height: 23px; white-space: nowrap;
  grid-template-columns: 53px 71px 53px 72px 72px 58px 68px 67px 41px 78px 60px 376px 41px 34px 43px 36.5px 32.500px 32px 31px 66px auto;
  background: linear-gradient(90deg, #59362a 0, #633422 200px, #7c3918 380px, #9a3912 680px, #903015 900px, #742a20 1080px, #602124 1240px, #431b29 1436px);
  text-shadow: 0 1px 1px #0004; letter-spacing: -.05px;
}
.menubar > span, .menubar > b { margin-top: -1px; }
.apple { width: 14px; height: 17px; margin-left: 20px; stroke: none; }
.kbd { width: 22px; height: 16px; border: 1.300px solid #f1e8e6; border-radius: 3px; text-align: center; font: 600 11px/13px Inter, sans-serif; }
.menubar > .kbd { margin-top: 0; }
.m16 { width: 16px; height: 16px; stroke: none; }
.ln { color: #eee5e3; stroke: currentColor; }
.batt { width: 26px; height: 12px; margin-left: -1px; stroke: none; stroke-width: 1; }
.wifi { width: 18px; height: 14px; stroke: none; }
.mag { width: 15px; height: 15px; }

/* Browser window */
.window { margin-top: 1px; height: 807px; border-radius: 10px 0 10px 10px; overflow: hidden; background: #202124; border-top: 1px solid #5b5c5f; box-shadow: 0 4px 14px #0009; }
.tabs { height: 41px; display: flex; align-items: flex-start; color: #fff; font-size: 12px; }
.lights { display: flex; gap: 8px; padding: 14px 0 0 21px; width: 95px; flex: none; }
.lights i { width: 12px; height: 12px; border-radius: 50%; background: #ff5f57; }
.lights i:nth-child(2) { background: #febc2e; }
.lights i:nth-child(3) { background: #28c840; }
.tab { display: flex; align-items: center; height: 34px; margin-top: 7px; flex: none; }
.t1 { width: 238px; padding-left: 11px; }
.t2 { width: 238px; padding-left: 11px; }
.t2::before { content: ""; width: 1px; height: 20px; background: #55575a; margin: 0 10px 0 -11px; }
.t3 { width: 240px; padding-left: 12px; background: #35363a; border-radius: 9px 9px 0 0; }
.fav { width: 15px; height: 15px; stroke-width: 1; margin-right: 8px; }
.t1 .fav { color: #53c1de; }
.t2 .fav { stroke: none; margin-right: 9px; }
.tt { width: 175px; white-space: nowrap; margin-right: 5px; }
.fade { -webkit-mask-image: linear-gradient(90deg, #000 150px, transparent 183px); mask-image: linear-gradient(90deg, #000 150px, transparent 183px); }
.t2 .tt { letter-spacing: .05px; }
.x { width: 16px; height: 16px; stroke-width: 1.6; }
.newtab { width: 16px; height: 16px; margin: 16px 0 0 14px; stroke-width: 1.9; }
.tabmenu { width: 18px; height: 18px; margin: 15px 9px 0 auto; stroke-width: 1.6; }
.uvt { width: 14px; height: 22px; color: #2062a8; text-align: center; font-size: 0; }
.uvt b { display: block; font: 700 9px/12px Inter, sans-serif; border-bottom: 1px solid #244786; letter-spacing: -.5px; height: 12px; }
.uvt em { color: #2f77b4; }
.uvt small { display: block; font: 800 6px/10px Inter, sans-serif; }
.uvt.mini { width: 11px; height: 15px; margin: 0 11px 0 2px; }
.mini b { font-size: 7px; line-height: 8px; height: 8px; }
.mini small { font-size: 5px; line-height: 6px; }

.toolbar { height: 37px; background: #35363a; border-bottom: 1px solid #626365; display: flex; align-items: center; color: #e8eaed; }
.tb { width: 16px; height: 16px; margin-left: 14px; margin-right: 2px; stroke-width: 1.700; }
.omnibox { width: 1131px; height: 28px; margin-left: 12px; border-radius: 14px; background: #202124; display: flex; align-items: center; padding-left: 13px; }
.lock { width: 10px; height: 13px; stroke: none; }
.url { margin-left: 11px; font-size: 14px; color: #8f9296; width: 1007px; flex: none; white-space: nowrap; letter-spacing: -.05px; }
.url b { font-weight: 400; color: #fff; }
.ob { width: 16px; height: 16px; margin-right: 16px; stroke-width: 1; color: #c5c7ca; }
.tr { stroke: none; }
.sh { stroke-width: 1.300; }
.panel { width: 14px; height: 14px; margin-left: 15px; stroke: none; }
.face { width: 22px; height: 22px; margin-left: 14px; stroke: none; }
.update { width: 121px; height: 28px; margin-left: 7px; border: 1px solid #76b589; border-radius: 14px; background: #37453f; color: #81c995; font-size: 13px; letter-spacing: -.1px; display: flex; align-items: center; padding-left: 12px; }
.update span { width: 92px; }
.update svg { width: 4px; height: 14px; fill: #81c995; stroke: none; }

/* Page */
.viewport { height: 728px; display: flex; background: #fff; letter-spacing: -.16px; }
.page { width: 1425px; display: flex; flex-direction: column; }
.scroll { flex: 1; background: #fafafa; border-left: 1px solid #e8e8e8; padding: 66px 0 0 3px; }
.scroll i { display: block; height: 270px; background: #c1c1c1; border-radius: 4px 0 0 4px; }
.gl-header { height: 48px; background: #292961; display: flex; align-items: center; color: #d3d0f0; flex: none; }
.gl-header > .uvt { margin: 0 29px 0 21px; }
.burger { width: 16px; display: grid; gap: 3.500px; margin-right: 18px; }
.burger i { height: 1.500px; background: #d3d0f0; }
.gsearch { width: 320px; height: 32px; border: 1px solid #7e7bab; border-radius: 4px; background: #4c4a7d; display: flex; align-items: center; padding: 0 7px; color: #b5b2da; }
.gsearch span { padding-top: 1px; }
.gsearch svg { width: 16px; height: 16px; margin-right: 4px; stroke-width: 1.300; }
.gsearch kbd { margin-left: auto; width: 19px; height: 18px; border-radius: 3px; background: #625f90; color: #e4e2f6; font: 12px/18px Inter, sans-serif; text-align: center; }
.gicons { display: grid; align-items: center; margin-left: 692px; grid-template-columns: 23px 36px 39px 19px 36px 37px 20px 36px 27px 16px; }
.gicons svg { width: 16px; height: 16px; overflow: visible; }
.gicons .gav { width: 23px; height: 23px; stroke: none; border-radius: 50%; overflow: hidden; }

.body { flex: 1; display: flex; min-height: 0; overflow: hidden; }
.sidebar { width: 256px; background: #f5f5f5; border-right: 1px solid #e9e9e9; padding: 2px 7px 0 8px; flex: none; display: flex; flex-direction: column; }
.ctx { height: 40px; background: #e1e1e1; border-radius: 4px; display: flex; align-items: center; padding-left: 4px; letter-spacing: -.07px; }
.ctx b { font-weight: 600; white-space: nowrap; }
.pav { width: 32px; height: 32px; background: #f4f0ff; border: 1px solid #dcd7ee; border-radius: 4px; text-align: center; line-height: 30px; margin-right: 8px; }
.sidebar ul { list-style: none; padding: 3px 13px 0 12px; }
.sidebar li { height: 33px; display: flex; align-items: center; white-space: nowrap; }
.sidebar li svg { width: 16px; height: 16px; margin-right: 8px; stroke-width: 1.400; }
.sidebar li em { margin-left: auto; width: 24px; height: 16px; border-radius: 8px; background: #cbe2f9; color: #0b5cad; font-size: 12px; line-height: 16px; text-align: center; }
.collapse { margin: auto 0 14px 8px; display: flex; align-items: center; letter-spacing: -.22px; }
.collapse svg { width: 12px; height: 12px; margin-right: 8px; stroke-width: 1.200; }

.main { width: 958px; margin-left: 105.600px; flex: none; }
.phead { display: flex; height: 60px; }
.bigav { width: 64px; height: 64px; margin-top: -4px; flex: none; border-radius: 8px; background: #f4f0ff; border: 1px solid #dfdbef; text-align: center; font-size: 28px; line-height: 62px; }
.ptitle { padding-left: 8px; width: 722px; white-space: nowrap; }
h1 { font-size: 22px; line-height: 30px; font-weight: 600; display: flex; align-items: center; margin-top: 3px; letter-spacing: -.17px; }
h1 svg { width: 16px; height: 16px; margin-left: 9px; color: #666; stroke-width: 1.300; }
.ptitle p { display: flex; align-items: center; margin-top: 3px; color: #666; }
.ptitle p svg { width: 16px; height: 16px; margin: 2px 15px 0 8px; color: #444; }
.ptitle .pid { width: 104px; letter-spacing: -.06px; }
.ptitle a { color: #1068bf; }
.pactions { display: flex; gap: 8px; padding-top: 11px; }
.sb { height: 25px; border: 1px solid #c4c4c4; border-radius: 4px; display: flex; align-items: center; flex: none; letter-spacing: -.1px; }
.sb svg { width: 16px; height: 16px; color: #555; stroke-width: 1.300; }
.bell { width: 44px; padding-left: 7px; }
.star { width: 87px; padding-left: 7px; }
.fork { width: 89px; padding-left: 7px; background: #f5f5f5; color: #666; border-color: #d4d4d4; }
.sb > span { flex: 1; padding-left: 5px; }
.sb u { width: 24px; height: 23px; line-height: 23px; text-align: center; text-decoration: none; border-left: 1px solid #c4c4c4; color: #303030; background: #fff; border-radius: 0 3px 3px 0; }
.stats { display: grid; grid-template-columns: 106px 110px 80px 300px; height: 20px; margin-top: 14px; color: #111; white-space: nowrap; }
.stats span { display: flex; align-items: center; gap: 4px; }
.stats svg { width: 16px; height: 16px; color: #666; stroke-width: 1.300; }
.stats b { font-weight: 600; letter-spacing: 0; }
.stats .s4 { color: #666; }
.forked { margin-top: 14px; letter-spacing: -.19px; }
.langs { display: flex; gap: 2px; height: 9px; margin-top: 16px; border-radius: 4px; overflow: hidden; }
.langs i { height: 9px; }
.js { width: 698px; background: #f1e05a; }
.ts { width: 178px; background: #4f5d95; }
.css { width: 51px; background: #563d7c; }
.html { width: 17px; background: #e34c26; }
.sc { flex: 1; background: #c6538c; }

.tree-bar { display: flex; align-items: flex-start; height: 51px; margin-top: 15px; white-space: nowrap; }
.select { width: 160px; height: 36px; flex: none; border: 1px solid #dcdcdc; border-radius: 4px; display: flex; align-items: center; justify-content: space-between; padding: 0 8px 0 10px; }
.select svg { width: 16px; height: 16px; color: #aaa; stroke-width: 1.200; }
.crumb { width: 208px; flex: none; margin: 8px 0 0 15px; }
.slash { width: 16px; flex: none; margin-top: 8px; }
.btn { height: 33px; border: 1px solid #c2c2c2; border-radius: 4px; display: flex; align-items: center; justify-content: center; margin-right: 8px; flex: none; }
.btn svg { width: 16px; height: 16px; color: #555; stroke-width: 1.400; }
.add { width: 53px; height: 34px; gap: 5px; margin-right: auto; }
.hist { width: 70.500px; } .find { width: 74.500px; } .ide { width: 79px; } .dl { width: 56px; gap: 4px; }
.clone { width: 81px; margin-right: 0; background: #1f75cb; border-color: #1068bf; color: #fff; padding-left: 2px; gap: 4px; }
.clone svg { color: #fff; }

.commit { height: 81px; border: 1px solid #dcdcdc; border-radius: 4px; background: #fafafa; display: flex; padding: 17px 16px 0 16px; white-space: nowrap; }
.cav { width: 32px; height: 32px; margin-top: 3px; stroke: none; border-radius: 50%; }
.ctext { width: 700px; padding-left: 12px; line-height: 20px; }
.cmsg { display: flex; align-items: center; margin-bottom: 1px; letter-spacing: -.03px; }
.cmsg b { font-weight: 600; width: 537px; }
.dots { width: 24px; height: 15px; border: 1px solid #bfbfbf; border-radius: 4px; display: flex; gap: 2px; justify-content: center; align-items: center; background: #fff; margin-top: 4px; }
.dots i { width: 4px; height: 4px; border-radius: 50%; background: #555; }
.cby { letter-spacing: -.2px; }
.cby em { color: #868686; }
.sha { width: 122px; height: 32px; flex: none; margin: -1px 0 0 auto; border: 1px solid #bfbfbf; border-radius: 4px; display: flex; align-items: center; background: #fff; overflow: hidden; letter-spacing: 0; }
.sha code { width: 91px; height: 32px; line-height: 31px; font-family: "DejaVu Sans Mono", monospace; font-size: 14px; background: #f0f0f0; border-right: 1px solid #c9c9c9; text-align: center; }
.sha svg { width: 16px; height: 16px; margin-left: 7px; color: #555; }

.quick { display: flex; gap: 8px; padding-top: 16px; height: 64px; white-space: nowrap; letter-spacing: -.26px; }
.q { height: 32px; border: 1px dashed #868686; border-radius: 4px; display: flex; align-items: center; padding-left: 10px; flex: none; }
.q svg { width: 16px; height: 16px; margin-right: 4px; color: #555; stroke-width: 1.300; }
.q1 { width: 97px; border: 1px solid #bfbfbf; } .q2 { width: 126px; } .q3 { width: 156px; } .q4 { width: 174px; } .q5 { width: 123px; }

.files { border: 1px solid #dcdcdc; border-radius: 4px; overflow: hidden; height: 171px; }
.row { height: 42px; display: grid; grid-template-columns: 318.500px 1fr 200px; align-items: center; padding: 0 16px; border-top: 1px solid #dcdcdc; color: #666; white-space: nowrap; }
.row b { font-weight: 600; letter-spacing: .15px; }
.row > :first-child { display: flex; align-items: center; color: #303030; }
.row > :last-child { text-align: right; }
.row svg { width: 16px; height: 16px; margin-right: 4px; color: #666; stroke-width: 1.300; }
.row .md { color: #42a5f5; stroke-width: 1.600; }
.head { height: 42px; background: #f0f0f0; border-top: 0; color: #303030; padding-top: 1px; }
.readme { margin-top: 16px; border: 1px solid #dcdcdc; border-radius: 4px 4px 0 0; height: 140px; }
.rhead { height: 38px; background: #fafafa; border-bottom: 1px solid #dcdcdc; display: flex; align-items: center; padding-left: 16px; font-weight: 600; letter-spacing: .1px; }
.rhead svg { width: 16px; height: 16px; margin-right: 4px; }
h2 { margin: 32px 32px 0 33px; height: 39px; border-bottom: 2px solid #efefef; font-size: 24px; line-height: 30px; font-weight: 600; letter-spacing: -.43px; }
.foot { height: 16px; background: #292961; color: #fff; font-size: 12px; line-height: 17px; text-align: center; flex: none; letter-spacing: -.07px; }

/* Dock */
.dock { width: 1380px; height: 48px; margin: 15px 0 0 30px; border: 1px solid #ffffff38; border-radius: 11px; display: flex; padding-left: 1.800px;
  background: linear-gradient(90deg, #192029 0, #1d202b 180px, #3d1928 300px, #511a2d 470px, #55182a 700px, #45142a 860px, #551938 1000px, #611a2b 1150px, #7b2017 1300px, #7d1e13 1380px); }
.app { width: 39.400px; display: flex; justify-content: center; align-items: flex-start; padding-top: 6px; position: relative; flex: none; }
.app > svg { width: 30px; height: 30px; stroke: none; }
.app .round { border-radius: 7px; overflow: hidden; }
.app .big { width: 33px; height: 33px; margin-top: -2px; }
.app .bigger { width: 36px; height: 36px; margin-top: -3px; }
.on::after { content: ""; position: absolute; left: 17.700px; top: 41px; width: 4px; height: 4px; border-radius: 50%; background: #c997a9; }
.on:nth-child(-n+5)::after { background: #9fa3a9; }
.calbox { width: 30px; height: 30px; border-radius: 7px; overflow: hidden; background: #fbfbfb; text-align: center; color: #333; }
.calbox b { display: block; height: 9px; background: #f04b4a; color: #fff; font: 700 6px/10px Inter, sans-serif; }
.calbox span { font: 300 19px/20px Inter, sans-serif; letter-spacing: -1px; }
.tvt { font: 500 12px Inter, sans-serif; fill: #fff; }
.sep { width: 1px; height: 36px; background: #ffffff50; margin-top: 5px; flex: none; }
.s-a { margin-left: 8px; margin-right: 7.400px; }
.s-b { margin-left: 9px; margin-right: 8px; }
.count { position: absolute; left: 25px; top: 3px; width: 14px; height: 14px; border-radius: 50%; background: #fb3b34; color: #fff; font-size: 9px; line-height: 14px; text-align: center; }
.app .paper { width: 25px; height: 36px; margin-top: -3px; }
.app .trash { width: 28px; height: 36px; margin-top: -3px; }
.app.thumb > svg { width: 36px; height: 34px; }
```
